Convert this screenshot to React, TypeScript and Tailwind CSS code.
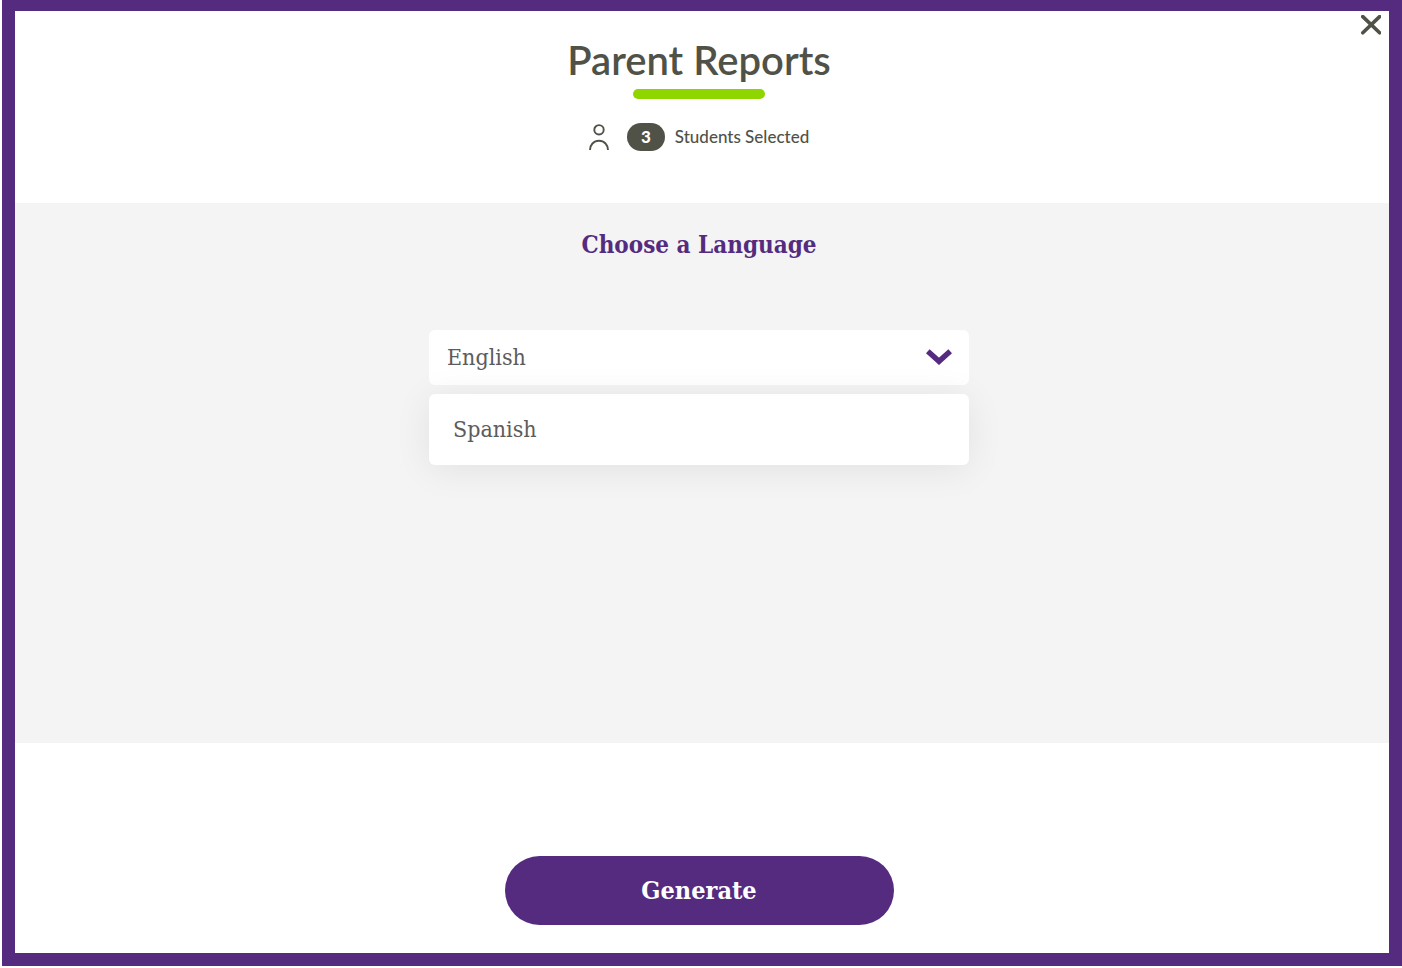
import React, { useState } from 'react';

const languages = ['English', 'Spanish'];

const CloseIcon = () => (
  <svg viewBox="0 0 20 20" className="h-5 w-5" fill="none" stroke="currentColor" strokeWidth="3.6" strokeLinecap="round" aria-hidden="true">
    <path d="M1.8 1.6 18.6 17.8M18.6 1.6 1.8 17.8" />
  </svg>
);

const PersonIcon = () => (
  <svg viewBox="0 0 20 26" className="h-[26px] w-5" fill="none" stroke="currentColor" strokeWidth="1.9" aria-hidden="true">
    <circle cx="10" cy="5.8" r="4.7" />
    <path d="M1 26c0-5 3.6-9.2 9-9.2s9 4.200 9 9.200" />
  </svg>
);

const ChevronIcon = () => (
  <svg viewBox="0 0 26 16" className="h-4 w-[26px]" fill="none" stroke="currentColor" strokeWidth="5.4" aria-hidden="true">
    <path d="M1.8 2.200 13 12.300 24.200 2.200" />
  </svg>
);

const LanguagePicker = () => {
  const [language, setLanguage] = useState('English');
  const [open, setOpen] = useState(true);

  const choose = (value: string) => {
    setLanguage(value);
    setOpen(false);
  };

  return (
    <div className="relative w-full max-w-[540px] font-['DejaVu_Serif_Condensed','DejaVu_Serif',serif] text-[23px] text-[#5c5c5c]">
      <select
        id="language"
        value={language}
        onChange={(e) => choose(e.target.value)}
        onMouseDown={(e) => {
          e.preventDefault();
          setOpen(!open);
        }}
        className="block h-[55px] w-full appearance-none rounded-md bg-white pl-[18px] pr-12"
      >
        {languages.map((name) => (
          <option key={name}>{name}</option>
        ))}
      </select>
      <span className="pointer-events-none absolute right-[17px] top-[19px] text-[#552b80]">
        <ChevronIcon />
      </span>

      {open && (
        <ul className="absolute left-0 top-full mt-[9px] w-full rounded-md bg-white shadow-[0_4px_36px_rgba(0,0,0,0.08)]">
          {languages
            .filter((name) => name !== language)
            .map((name) => (
              <li key={name}>
                <button type="button" onClick={() => choose(name)} className="h-[71px] w-full px-6 text-left">
                  {name}
                </button>
              </li>
            ))}
        </ul>
      )}
    </div>
  );
};

const App = () => {
  return (
    <div className="flex min-h-screen flex-col bg-white pb-0.5 pl-0.5">
      <main className="relative flex flex-1 flex-col border-[13px] border-t-[11px] border-[#552b80] text-[#505248]">
        <button type="button" aria-label="Close" className="absolute right-2 top-1">
          <CloseIcon />
        </button>

        <header className="flex flex-col items-center pb-[52px] pr-1.5 pt-6">
          <h1 className="font-[Lato,sans-serif] text-[40px] font-semibold leading-[50px]">Parent Reports</h1>
          <div className="mt-1 h-[10px] w-[132px] rounded-full bg-[#8fd600]" />
          <div className="mt-6 flex h-7 items-center font-[Lato,sans-serif] text-[17px] font-medium">
            <PersonIcon />
            <span className="ml-[18px] flex h-7 w-[38px] items-center justify-center rounded-full bg-[#505248] font-black text-white">
              3
            </span>
            <span className="ml-[10px]">Students Selected</span>
          </div>
        </header>

        <section className="flex flex-1 flex-col items-center bg-[#f4f4f4] pb-24 pl-4 pr-[22px] pt-6">
          <label
            htmlFor="language"
            className="mb-[67px] font-['DejaVu_Serif_Condensed','DejaVu_Serif',serif] text-[24px] font-bold leading-9 text-[#552b80]"
          >
            Choose a Language
          </label>
          <LanguagePicker />
        </section>

        <footer className="flex justify-center pb-7 pl-4 pr-[22px] pt-[113px]">
          <button
            type="button"
            className="h-[69px] w-full max-w-[389px] rounded-full bg-[#552b80] font-['DejaVu_Serif_Condensed','DejaVu_Serif',serif] text-[25px] font-bold text-white"
          >
            Generate
          </button>
        </footer>
      </main>
    </div>
  );
};

export default App;
